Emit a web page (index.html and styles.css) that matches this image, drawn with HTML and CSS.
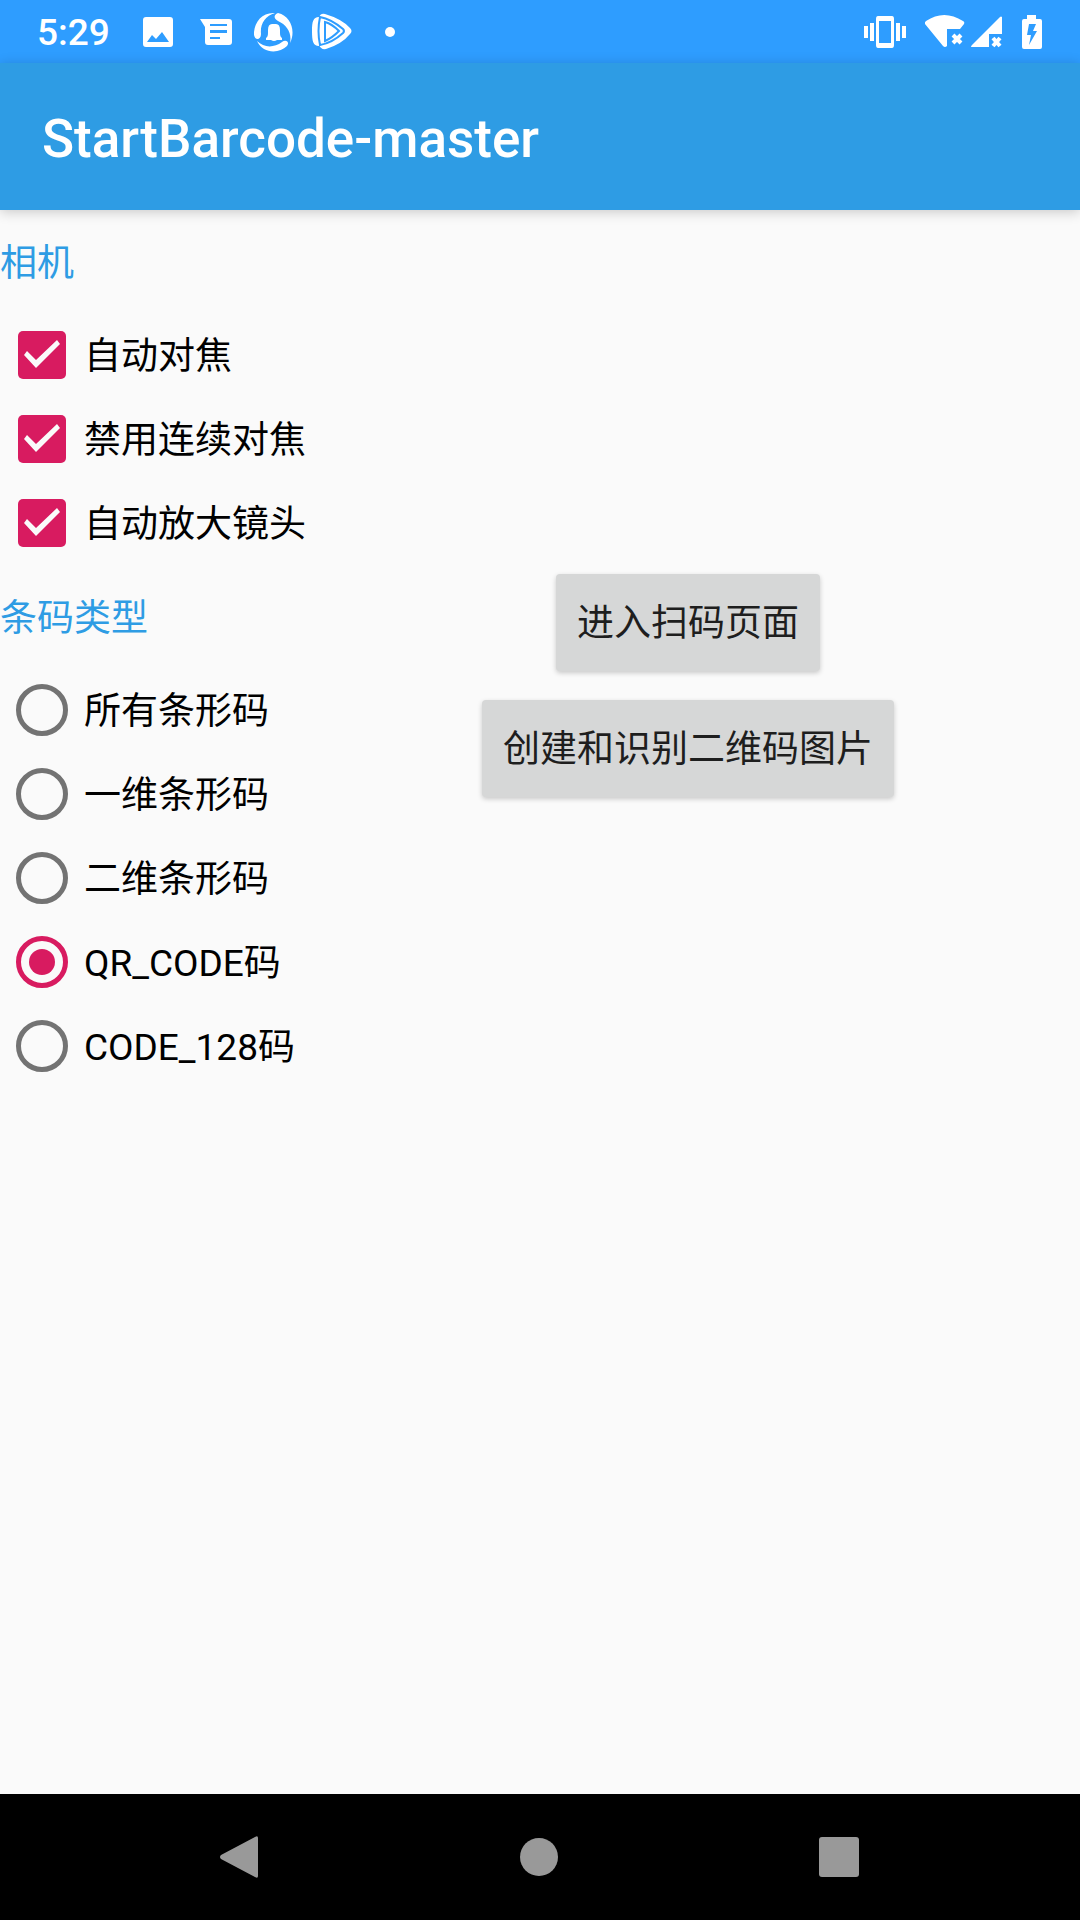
FILE: index.html
```html
<!DOCTYPE html>
<html lang="zh-CN">
<head>
<meta charset="utf-8">
<meta name="viewport" content="width=device-width, initial-scale=1">
<title>StartBarcode-master</title>
<link rel="stylesheet" href="styles.css">
</head>
<body>
<div class="status-bar">
  <div class="status-group notices">
    <span class="clock">5:29</span>
    <svg class="icon" width="30" height="30" viewBox="0 0 30 30" aria-hidden="true"><path fill-rule="evenodd" d="M3 0H27Q30 0 30 3V27Q30 30 27 30H3Q0 30 0 27V3Q0 0 3 0ZM4 25H26L19 15L13 22L9 18Z"/></svg>
    <svg class="icon message" width="32" height="26" viewBox="0 0 32 26" aria-hidden="true"><path fill-rule="evenodd" d="M0 0H29Q32 0 32 3V23Q32 26 29 26H8Q5 26 5 23V8ZM10 5V7H27V5ZM10 11V14H27V11ZM10 18V20H20V18Z"/></svg>
    <svg class="icon bell" width="40" height="40" viewBox="0 0 40 40" aria-hidden="true"><path d="M21 1C9 0 1 9 0 20C-1 29 7 29 7 22C6 12 11 4 21 1ZM24 1C19 3 20 7 24 9C33 13 38 21 36 31C42 19 37 4 24 1ZM3 29C9 42 25 42 33 34C36 30 32 27 28 30C20 36 10 36 3 29Z"/><path d="M12 28V26Q14 25 14 21V18Q14 12 18 12H22Q26 12 26 18V21Q26 25 28 26V28H23Q20 30 17 28Z"/></svg>
    <svg class="icon" width="40" height="38" viewBox="0 0 40 38" aria-hidden="true"><path d="M7 4C1 4 0 9 0 18C0 28 1 33 7 33ZM7 5Q8 0 13 1Q30 6 38 15Q41 18 38 21Q30 31 14 36Q9 37 7 32Z"/><path class="groove" d="M8 4Q19 6 31 16Q33 18 31 20Q20 30 8 32Q5 18 8 4ZM13 9V28Q20 25 27 18Q20 11 13 9Z"/></svg>
    <svg class="icon more" width="10" height="10" viewBox="0 0 10 10" aria-hidden="true"><circle cx="5" cy="5" r="5"/></svg>
  </div>
  <div class="status-group system">
    <svg class="icon" width="42" height="32" viewBox="0 0 42 32" aria-hidden="true"><path fill-rule="evenodd" d="M14 0H28Q30 0 30 3V29Q30 32 28 32H14Q12 32 12 29V3Q12 0 14 0ZM15 5V27H27V5Z"/><path d="M0 10H4V22H0ZM6 7H10V25H6ZM32 7H36V25H32ZM38 10H42V22H38Z"/></svg>
    <svg class="icon wifi" width="40" height="34" viewBox="0 0 40 34" aria-hidden="true"><path d="M0 9Q-1 8 1 6Q19 -6 38 6Q40 7 39 9L35 14H22V31Q20 33 18 31Z"/><path class="cross" d="M28 20L36 28M36 20L28 28"/></svg>
    <svg class="icon signal" width="31" height="32" viewBox="0 0 31 32" aria-hidden="true"><path d="M31 1V18H18V31H1Q-1 31 1 29L29 1Q30 0 31 1Z"/><path class="cross" d="M22 22L29 30M29 22L22 30"/></svg>
    <svg class="icon battery" width="20" height="34" viewBox="0 0 20 34" aria-hidden="true"><path fill-rule="evenodd" d="M5 0H14V4H18Q20 4 20 6V32Q20 34 18 34H2Q0 34 0 32V6Q0 4 2 4H5ZM7 9L5 20H9L7 30L15 16H11L14 9Z"/></svg>
  </div>
</div>
<header class="app-bar"><h1 class="app-title">StartBarcode-master</h1></header>
<main class="content">
  <form class="options">
    <fieldset class="group">
      <legend class="group-title">相机</legend>
      <label class="option"><input class="check" type="checkbox" checked><span class="option-text">自动对焦</span></label>
      <label class="option"><input class="check" type="checkbox" checked><span class="option-text">禁用连续对焦</span></label>
      <label class="option"><input class="check" type="checkbox" checked><span class="option-text">自动放大镜头</span></label>
    </fieldset>
    <fieldset class="group">
      <legend class="group-title">条码类型</legend>
      <label class="option"><input class="radio" type="radio" name="type"><span class="option-text">所有条形码</span></label>
      <label class="option"><input class="radio" type="radio" name="type"><span class="option-text">一维条形码</span></label>
      <label class="option"><input class="radio" type="radio" name="type"><span class="option-text">二维条形码</span></label>
      <label class="option"><input class="radio" type="radio" name="type" checked><span class="option-text">QR_CODE码</span></label>
      <label class="option"><input class="radio" type="radio" name="type"><span class="option-text">CODE_128码</span></label>
    </fieldset>
  </form>
  <div class="actions">
    <button class="action" type="button">进入扫码页面</button>
    <button class="action" type="button">创建和识别二维码图片</button>
  </div>
</main>
<nav class="nav-bar">
  <button class="nav-button" type="button" aria-label="返回"><svg width="38" height="42" viewBox="0 0 38 42"><path d="M35 1Q38 -1 38 2V40Q38 43 35 41L1 23Q-1 21 1 19Z"/></svg></button>
  <button class="nav-button" type="button" aria-label="主页"><svg width="38" height="38" viewBox="0 0 38 38"><circle cx="19" cy="19" r="19"/></svg></button>
  <button class="nav-button" type="button" aria-label="最近"><svg width="40" height="40" viewBox="0 0 40 40"><rect width="40" height="40" rx="3"/></svg></button>
</nav>
</body>
</html>
```
FILE: styles.css
```css
* { box-sizing: border-box; }

body {
  margin: 0;
  min-height: 100vh;
  display: flex;
  flex-direction: column;
  background: #fafafa;
  color: #000;
  font-family: Roboto, "Noto Sans CJK SC", sans-serif;
  font-size: 37px;
  line-height: 44px;
}

.status-bar {
  height: 63px;
  padding: 0 38px 0 37px;
  display: flex;
  justify-content: space-between;
  align-items: center;
  background: #2e9dff;
  color: #fff;
}

.status-group { display: flex; align-items: center; }
.notices { gap: 18px; }
.clock { margin-right: 15px; padding-top: 2px; font-weight: 500; }
.icon { fill: currentColor; flex: none; }
.message { margin-left: 9px; }
.bell { margin-left: 4px; }
.more { margin-left: 15px; }
.wifi { margin-left: 19px; }
.signal { margin-left: 6px; }
.battery { margin-left: 20px; }
.cross { fill: none; stroke: currentColor; stroke-width: 4; }
.groove { fill: none; stroke: #2e9dff; stroke-width: 2; }

.app-bar {
  height: 147px;
  padding: 4px 42px 0;
  display: flex;
  align-items: center;
  background: #2e9ce4;
  color: #fff;
  box-shadow: 0 2px 12px rgba(0, 0, 0, 0.2);
}

.app-title {
  margin: 0;
  font-size: 53px;
  line-height: 64px;
  font-weight: 500;
}

.content { flex: 1; display: flex; align-items: flex-start; }

.group { margin: 0; padding: 0; border: 0; min-width: 0; }

.group-title {
  height: 103px;
  padding: 2px 0 0;
  line-height: 103px;
  color: #2e9ce4;
}

.option {
  height: 84px;
  display: flex;
  align-items: center;
  gap: 16px;
  padding-left: 16px;
  white-space: nowrap;
}

.option-text { padding-top: 3px; }

.check,
.radio { appearance: none; flex: none; display: grid; place-items: center; }

.check {
  width: 48px;
  height: 48px;
  margin: 0 2px;
  border: 5px solid #737373;
  border-radius: 5px;
}

.check:checked { border: 0; background: #d81b60; }

.check:checked::before {
  content: "";
  width: 48px;
  height: 48px;
  background: #fafafa;
  clip-path: polygon(6px 24px, 9px 20px, 18px 29px, 39px 9px, 42px 13px, 18px 37px);
}

.radio {
  width: 52px;
  height: 52px;
  margin: 0;
  border: 5px solid #737373;
  border-radius: 50%;
}

.radio:checked { border-color: #d81b60; }

.radio:checked::before {
  content: "";
  width: 26px;
  height: 26px;
  border-radius: 50%;
  background: #d81b60;
}

.actions {
  flex: 1;
  padding: 364px 10px 0 0;
  display: flex;
  flex-direction: column;
  align-items: center;
  gap: 29px;
}

.action {
  height: 97px;
  padding: 2px 21px 0;
  border: 0;
  border-radius: 4px;
  background: #d6d7d7;
  color: #1e1e1e;
  font: inherit;
  box-shadow: 0 2px 5px rgba(0, 0, 0, 0.2);
}

.nav-bar {
  height: 126px;
  padding: 0 91px 0 89px;
  display: flex;
  background: #000;
}

.nav-button {
  flex: 1;
  padding: 0;
  border: 0;
  background: none;
  display: grid;
  place-items: center;
}

.nav-button svg { fill: #999; }
```
